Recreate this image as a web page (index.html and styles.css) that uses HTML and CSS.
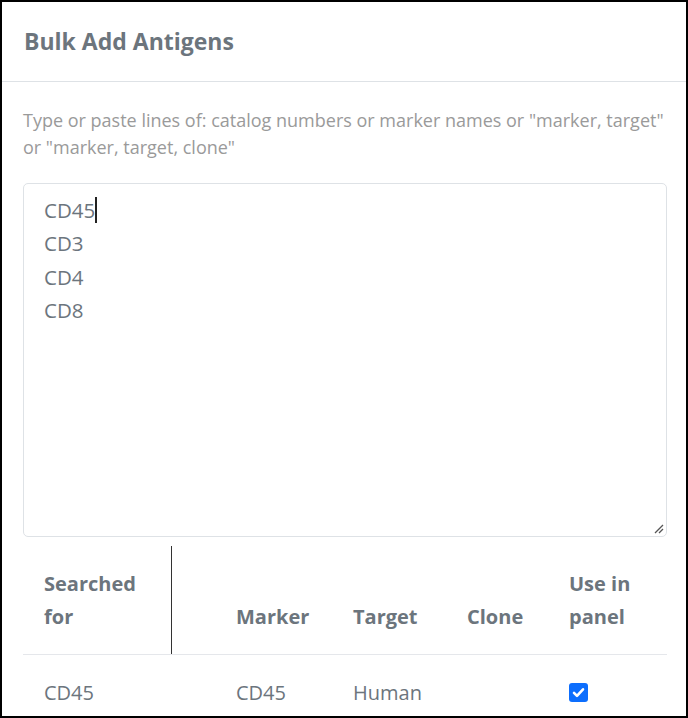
FILE: index.html
```html
<!DOCTYPE html>
<html>
<head>
<meta charset="utf-8">
<link rel="stylesheet" href="styles.css">
</head>
<body>
<div class="modal">
  <div class="modal-header">
    <h2 class="title">Bulk Add Antigens</h2>
  </div>
  <div class="modal-body">
    <p class="hint">Type or paste lines of: catalog numbers or marker names or "marker, target" or "marker, target, clone"</p>
    <div class="textarea">
      <div class="line">CD45<span class="caret"></span></div>
      <div class="line">CD3</div>
      <div class="line">CD4</div>
      <div class="line">CD8</div>
      <svg class="grip" width="12" height="12" viewBox="0 0 12 12"><path d="M11 3 L3 11 M11 7 L7 11" stroke="#555" stroke-width="1.3" fill="none"/></svg>
    </div>
    <table class="results">
      <colgroup>
        <col class="c1"><col class="c2"><col class="c3"><col class="c4"><col class="c5"><col class="c6">
      </colgroup>
      <thead>
        <tr>
          <th class="sep">Searched for</th>
          <th></th>
          <th>Marker</th>
          <th>Target</th>
          <th>Clone</th>
          <th>Use in panel</th>
        </tr>
      </thead>
      <tbody>
        <tr>
          <td>CD45</td>
          <td></td>
          <td>CD45</td>
          <td>Human</td>
          <td></td>
          <td><span class="check"><svg width="19" height="19" viewBox="0 0 19 19"><path d="M5 9.8 L8 12.8 L14 6.3" stroke="#fff" stroke-width="2.6" fill="none" stroke-linecap="round" stroke-linejoin="round"/></svg></span></td>
        </tr>
      </tbody>
    </table>
  </div>
</div>
</body>
</html>
```
FILE: styles.css
```css
html, body {
  margin: 0;
  padding: 0;
  background: #fff;
}
body {
  font-family: "Open Sans", "Noto Sans", sans-serif;
  color: #6c757d;
}
.modal {
  width: 688px;
  height: 718px;
  box-sizing: border-box;
  border: 2px solid #000;
  overflow: hidden;
}
.modal-header {
  height: 80px;
  box-sizing: border-box;
  border-bottom: 1px solid #dee2e6;
  padding: 0 22px;
  display: flex;
  align-items: center;
}
.title {
  margin: 0;
  font-size: 23px;
  font-weight: 700;
  color: #6c757d;
  line-height: 1.2;
}
.modal-body {
  padding: 25px 19px 0 21px;
}
.hint {
  margin: 0 0 22px;
  font-size: 18px;
  line-height: 27px;
  color: #9a9a9a;
}
.textarea {
  position: relative;
  height: 354px;
  box-sizing: border-box;
  border: 1px solid #dee2e6;
  border-radius: 5px;
  padding: 10px 20px;
  font-size: 20.5px;
  line-height: 33.3px;
  color: #6c757d;
}
.caret {
  display: inline-block;
  width: 1.5px;
  height: 26px;
  background: #222;
  vertical-align: -5px;
}
.grip {
  position: absolute;
  right: 2px;
  bottom: 2px;
}
.results {
  width: 644px;
  border-collapse: collapse;
  table-layout: fixed;
  margin-top: 9px;
}
.c1 { width: 148px; }
.c2 { width: 44px; }
.c3 { width: 117px; }
.c4 { width: 114px; }
.c5 { width: 102px; }
.c6 { width: 119px; }
.results th,
.results td {
  padding: 21px 12px 21px 21px;
  text-align: left;
  font-size: 20px;
  line-height: 33px;
  color: #6c757d;
}
.results th {
  font-weight: 700;
  vertical-align: bottom;
  border-bottom: 1px solid #e5e7eb;
}
.results th.sep {
  border-right: 1px solid #333;
}
.results td {
  vertical-align: middle;
  padding-top: 21px;
  padding-bottom: 8px;
}
.check {
  display: inline-flex;
  width: 19px;
  height: 19px;
  background: #0d6efd;
  border-radius: 3px;
  vertical-align: -2px;
}
```
